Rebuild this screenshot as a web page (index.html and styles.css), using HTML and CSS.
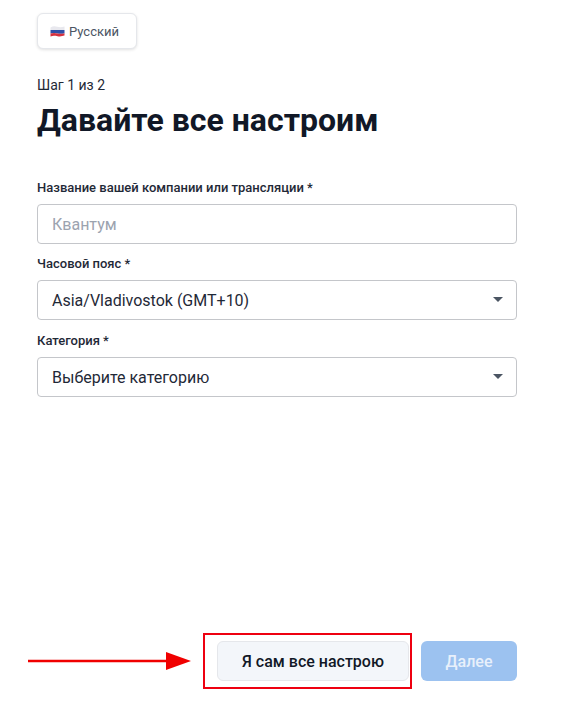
FILE: index.html
```html
<!DOCTYPE html>
<html lang="ru">
<head>
    <meta charset="UTF-8">
    <meta name="viewport" content="width=device-width, initial-scale=1.0">
    <title>Давайте все настроим</title>
    <link rel="stylesheet" href="styles.css">
</head>
<body>

    <div class="page">
        <button class="lang-button">
            <svg class="flag" width="15" height="11" viewBox="0 0 15 11">
                <path d="M0.5 1.4 C3 0 5 0.2 7.5 0.8 C10 1.4 12 1.2 14.5 0.4 V4 H0.5 Z" fill="#e8e8ee"/>
                <path d="M0.5 4 H14.5 V7.2 C12 8 10 8 7.5 7.4 C5 6.8 3 6.6 0.5 7.6 Z" fill="#2f4fa8"/>
                <path d="M0.5 7.6 C3 6.6 5 6.8 7.5 7.4 C10 8 12 8 14.5 7.2 V9.6 C12 10.4 10 10.6 7.5 10.2 C5 9.8 3 9.6 0.5 10.4 Z" fill="#d5303e"/>
            </svg>
            Русский
        </button>

        <div class="step">Шаг 1 из 2</div>
        <h1>Давайте все настроим</h1>

        <form class="setup-form">
            <div class="field">
                <label for="company">Название вашей компании или трансляции *</label>
                <input id="company" type="text" placeholder="Квантум">
            </div>
            <div class="field">
                <label for="timezone">Часовой пояс *</label>
                <div class="select-wrap">
                    <select id="timezone">
                        <option>Asia/Vladivostok (GMT+10)</option>
                    </select>
                    <span class="caret"></span>
                </div>
            </div>
            <div class="field field-last">
                <label for="category">Категория *</label>
                <div class="select-wrap">
                    <select id="category">
                        <option>Выберите категорию</option>
                    </select>
                    <span class="caret"></span>
                </div>
            </div>
        </form>

        <div class="actions">
            <div class="highlight">
                <svg class="arrow" width="164" height="20" viewBox="0 0 164 20">
                    <rect x="0" y="8.75" width="140" height="2.5" fill="#f00000"/>
                    <polygon points="138,1 163,10 138,19" fill="#f00000"/>
                </svg>
                <button class="btn btn-secondary">Я сам все настрою</button>
            </div>
            <button class="btn btn-primary" disabled>Далее</button>
        </div>
    </div>

</body>
</html>
```

FILE: styles.css
```css
* {
    margin: 0;
    padding: 0;
    box-sizing: border-box;
}

body {
    font-family: Roboto, "Noto Sans", sans-serif;
    background: #fff;
    color: #111827;
}

.page {
    height: 707px;
    padding: 13px 68px 26px 37px;
    display: flex;
    flex-direction: column;
    align-items: flex-start;
}

.lang-button {
    width: 100px;
    height: 36px;
    padding-left: 12px;
    display: flex;
    align-items: center;
    gap: 4px;
    font-family: inherit;
    font-size: 13px;
    color: #4b5563;
    background: #fff;
    border: 1px solid #e5e7eb;
    border-radius: 6px;
    box-shadow: 0 1px 3px rgba(0, 0, 0, 0.12);
}

.flag {
    flex: none;
}

.step {
    margin-top: 28px;
    font-size: 14px;
    line-height: 17px;
    color: #1f2937;
}

h1 {
    margin-top: 6px;
    font-size: 32px;
    line-height: 40px;
    font-weight: 700;
    color: #111827;
}

.setup-form {
    width: 100%;
    margin-top: 40px;
    display: flex;
    flex-direction: column;
    gap: 12px;
}

.field label {
    display: block;
    margin-bottom: 9px;
    font-size: 13px;
    line-height: 15px;
    font-weight: 500;
    color: #1f2937;
}

.field-last {
    margin-top: 1px;
}

input,
select {
    display: block;
    width: 100%;
    height: 40px;
    padding: 0 14px;
    font-family: inherit;
    font-size: 16px;
    color: #1f2937;
    background: #fff;
    border: 1px solid #c4c6ca;
    border-radius: 4px;
    appearance: none;
    outline: none;
}

input::placeholder {
    color: #9ca3af;
    opacity: 1;
}

.select-wrap {
    position: relative;
}

.caret {
    position: absolute;
    top: 17px;
    right: 14px;
    width: 0;
    height: 0;
    border-left: 5px solid transparent;
    border-right: 5px solid transparent;
    border-top: 5px solid #4b5563;
}

.actions {
    width: 100%;
    margin-top: auto;
    display: flex;
    justify-content: flex-end;
    gap: 12px;
}

.highlight {
    position: relative;
}

/* red annotation around the button */
.highlight::before {
    content: "";
    position: absolute;
    top: -8px;
    left: -14px;
    right: -3px;
    bottom: -8px;
    border: 2.5px solid #ee0010;
}

.arrow {
    position: absolute;
    top: 10px;
    left: -189px;
}

.btn {
    position: relative;
    display: block;
    height: 40px;
    font-family: inherit;
    font-size: 16px;
    font-weight: 500;
    border-radius: 6px;
}

.btn-secondary {
    width: 192px;
    color: #111827;
    background: #f3f6fa;
    border: 1px solid #e5e7eb;
}

.btn-primary {
    width: 96px;
    color: #e8f0fb;
    background: #9cc2f0;
    border: none;
}
```
